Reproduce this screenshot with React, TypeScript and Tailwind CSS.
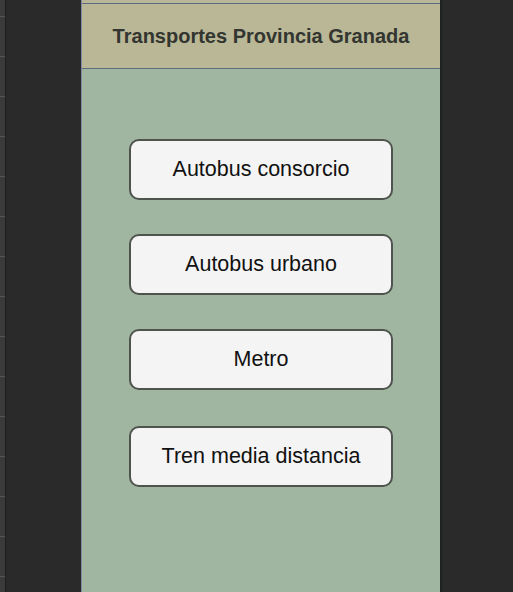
const opciones = [
  "Autobus consorcio",
  "Autobus urbano",
  "Metro",
  "Tren media distancia",
];

const App = () => {
  return (
    <div className="flex h-[592px] w-[513px] overflow-hidden bg-[#2a2a2a] font-['Liberation_Sans',Arial,sans-serif]">
      <div className="flex w-[5px] flex-col bg-[#3b3b3b]">
        {Array.from({ length: 15 }).map((_, i) => (
          <div
            key={i}
            className="h-[40px] shrink-0 border-b border-[#555] first:h-[17px]"
          />
        ))}
      </div>
      <div className="w-px bg-[#1e1e1e]" />
      <div className="w-[75px]" />

      <div className="flex w-[359px] flex-col border-l border-[#7e8aa6] bg-[#a0b6a0]">
        <div className="h-[3px] bg-[#b9b798]" />
        <div className="h-px bg-[#5d6d80]" />
        <div className="flex h-[64px] items-center justify-center bg-[#b9b796]">
          <h1 className="text-[20px] font-bold text-[#333530]">
            Transportes Provincia Granada
          </h1>
        </div>
        <div className="h-px bg-[#5d6d80]" />

        <div className="flex flex-col items-center gap-[34px] pt-[70px]">
          {opciones.map((o) => (
            <button
              key={o}
              className="flex h-[61px] w-[264px] items-center justify-center rounded-[10px] border-2 border-[#4e534e] bg-[#f4f4f4] text-[21.5px] text-[#111] last:mt-[2px]"
            >
              {o}
            </button>
          ))}
        </div>
      </div>

      <div className="w-[2px] bg-[#1f231f]" />
    </div>
  );
};

export default App;
